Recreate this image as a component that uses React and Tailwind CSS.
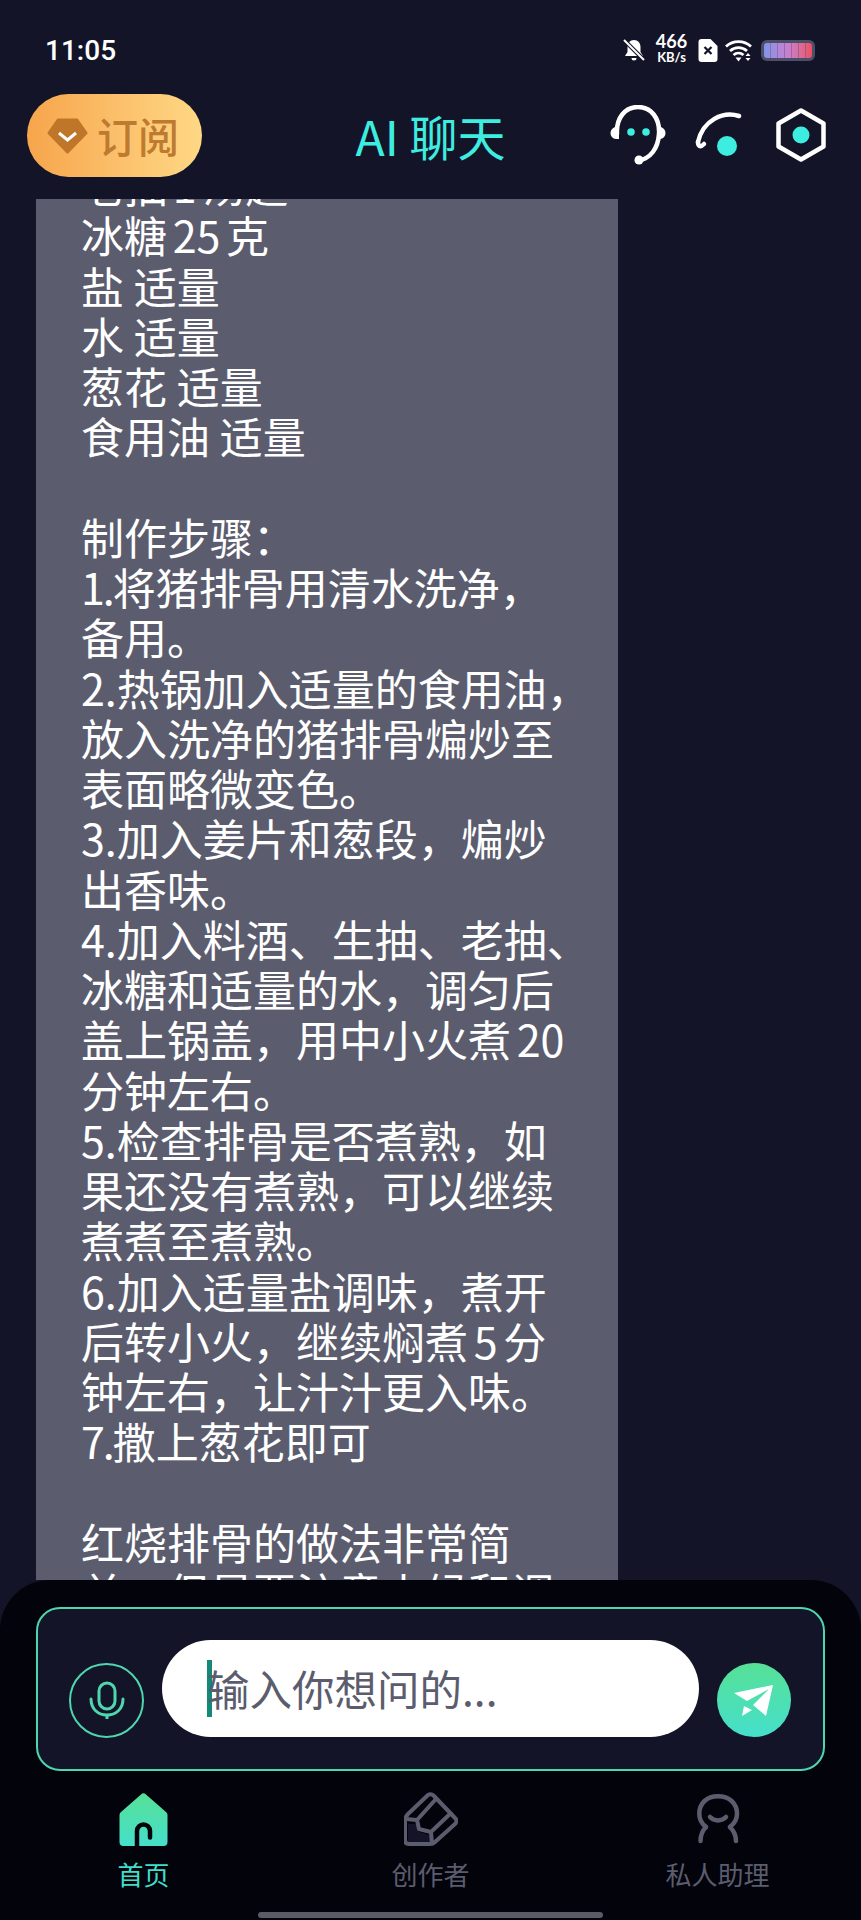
import React from 'react';

const lines = [
  '老抽 1 汤匙',
  '冰糖 25 克',
  '盐 适量',
  '水 适量',
  '葱花 适量',
  '食用油 适量',
  '',
  '制作步骤：',
  '1.将猪排骨用清水洗净，',
  '备用。',
  '2.热锅加入适量的食用油，',
  '放入洗净的猪排骨煸炒至',
  '表面略微变色。',
  '3.加入姜片和葱段，煸炒',
  '出香味。',
  '4.加入料酒、生抽、老抽、',
  '冰糖和适量的水，调匀后',
  '盖上锅盖，用中小火煮 20',
  '分钟左右。',
  '5.检查排骨是否煮熟，如',
  '果还没有煮熟，可以继续',
  '煮煮至煮熟。',
  '6.加入适量盐调味，煮开',
  '后转小火，继续焖煮 5 分',
  '钟左右，让汁汁更入味。',
  '7.撒上葱花即可',
  '',
  '红烧排骨的做法非常简',
  '单，但是要注意火候和调',
];

// 1 and 7 sit tighter in the original font, and spaces next to digits are narrower
const ChatLine = ({ line }) => {
  const narrow = /^[17]\./.test(line);
  return (
    <div className={`h-[50.250px] ${/\d /.test(line) || / \d/.test(line) ? '[word-spacing:-4px]' : ''}`}>
      {narrow ? (
        <>
          <span className="tracking-[-2px]">{line.slice(0, 2)}</span>
          {line.slice(2)}
        </>
      ) : (
        line
      )}
    </div>
  );
};

const StatusBar = () => (
  <div className="h-[95px] shrink-0 flex items-center pl-[45px] pr-[46px] pt-[5px] text-white">
    <span className="text-[28px] font-medium font-['Roboto',sans-serif] leading-none translate-y-[1px]">11:05</span>
    <div className="ml-auto flex items-center">
      <svg width="24" height="24" viewBox="0 0 24 24">
        <path d="M12 2c4 0 6.500 3 6.500 7v5l2.500 4H3l2.500-4V9C5.500 5 8 2 12 2z" fill="#fff" />
        <path d="M9.500 20h5a2.500 2.500 0 0 1-5 0z" fill="#fff" />
        <path d="M2 2l20 20" stroke="#141428" strokeWidth="4" />
        <path d="M2 2l20 20" stroke="#fff" strokeWidth="2" />
      </svg>
      <div className="ml-[9px] w-[33px] flex flex-col items-center font-['Lato',sans-serif] font-bold leading-none -translate-y-[1px]">
        <span className="text-[18px] h-[15px] leading-[15px]">466</span>
        <span className="text-[13px] h-[13px] leading-[13px] mt-[2px] whitespace-nowrap">KB/s</span>
      </div>
      <svg className="ml-[10px]" width="20" height="23" viewBox="0 0 19 23">
        <path d="M3 0h9l7 7v13a3 3 0 0 1-3 3H3a3 3 0 0 1-3-3V3a3 3 0 0 1 3-3z" fill="#fff" />
        <path d="M6 8l7 7M13 8l-7 7" stroke="#141428" strokeWidth="2.200" />
      </svg>
      <svg className="ml-[7px]" width="28" height="23" viewBox="0 0 28 23" fill="none">
        <path d="M1 7.500C8 1 19 1 26 7.500" stroke="#fff" strokeWidth="2.800" />
        <path d="M5 12c5-4.500 12-4.500 17 0" stroke="#fff" strokeWidth="2.800" />
        <path d="M8.500 16c3-2.500 7-2.500 10 0" stroke="#fff" strokeWidth="2.800" />
        <path d="M10.500 18.500h6l-3 4z" fill="#fff" />
        <path d="M23 14l2.500 3h-5zM23 22l2.500-3h-5z" fill="#fff" />
      </svg>
      <div className="ml-[8px] w-[54px] h-[21px] rounded-[6px] bg-[#4d4f68] p-[3px]">
        <div className="h-full rounded-[3px] bg-gradient-to-r from-[#7f93e8] via-[#c97fd0] to-[#ec4f63] flex justify-evenly">
          <i className="w-px h-full bg-[#4d4f68]/40" />
          <i className="w-px h-full bg-[#4d4f68]/40" />
          <i className="w-px h-full bg-[#4d4f68]/40" />
          <i className="w-px h-full bg-[#4d4f68]/40" />
          <i className="w-px h-full bg-[#4d4f68]/40" />
          <i className="w-px h-full bg-[#4d4f68]/40" />
        </div>
      </div>
    </div>
  </div>
);

const Header = () => (
  <div className="h-[104px] shrink-0 relative flex items-start pl-[27px]">
    <div className="w-[175px] h-[83px] -mt-[1px] rounded-full bg-gradient-to-r from-[#f6a54b] to-[#ffd885] flex items-center pl-[20px]">
      <svg width="41" height="36" viewBox="0 0 41 36">
        <path d="M11 2h19l9 13-18.500 19L2 15z" fill="#bf7629" stroke="#bf7629" strokeWidth="3" strokeLinejoin="round" />
        <path d="M12 15l8.500 7 8.500-7" fill="none" stroke="#fff" strokeWidth="3" />
      </svg>
      <span className="ml-[9px] text-[41px] leading-none font-medium text-[#bd7a30]">订阅</span>
    </div>
    <div className="absolute left-0 right-0 top-[10px] text-center text-[48px] leading-[60px] text-[#3deee0]">AI 聊天</div>
    <div className="ml-auto mr-[35px] mt-[10px] flex items-start">
      <svg width="56" height="60" viewBox="0 0 56 60" fill="none">
        <path d="M7 29C6 13 15 2 28 2s22 11 21 27c-1 14-8 25-22 27" stroke="#fff" strokeWidth="4.500" strokeLinecap="round" />
        <circle cx="29" cy="55" r="4.500" fill="#fff" />
        <path d="M7 22a6 6 0 0 0-1 12h3V22z" fill="#fff" />
        <path d="M49 22a6 6 0 0 1 1 12h-3V22z" fill="#fff" />
        <circle cx="21" cy="27" r="3.800" fill="#3deee0" />
        <circle cx="36" cy="27" r="3.800" fill="#3deee0" />
      </svg>
      <svg className="ml-[29px] mt-[5px]" width="63" height="46" viewBox="0 0 63 46" fill="none">
        <path d="M44 6C28 1 8 10 3 32" stroke="#fff" strokeWidth="4.500" strokeLinecap="round" />
        <path d="M3 32c0 4 2 6 6 2" stroke="#fff" strokeWidth="4.500" strokeLinecap="round" />
        <circle cx="32" cy="36" r="10" fill="#3deee0" />
      </svg>
      <svg className="ml-[18px] mt-[3px]" width="50" height="54" viewBox="0 0 50 54" fill="none">
        <path d="M25 2.500l22.500 13v23L25 51.500 2.500 38.500v-23z" stroke="#fff" strokeWidth="4.500" strokeLinejoin="round" />
        <circle cx="25" cy="27" r="8.500" fill="#3deee0" />
      </svg>
    </div>
  </div>
);

const NavItem = ({ label, active, children }) => (
  <div className="flex flex-col items-center">
    <div className="h-[54px] flex items-center justify-center">{children}</div>
    <span className={`mt-[12px] text-[26px] leading-[32px] ${active ? 'text-[#3fdfcb]' : 'text-[#5b5d6e]'}`}>{label}</span>
  </div>
);

const App = () => {
  return (
    <div className="w-[861px] h-[1920px] bg-[#141428] flex flex-col overflow-hidden font-['Noto_Sans_CJK_SC',sans-serif]">
      <StatusBar />
      <Header />

      {/* Chat bubble, scrolled part way */}
      <div className="flex-1 min-h-0 overflow-hidden">
        <div className="ml-[36px] w-[582px] h-full overflow-hidden bg-[#5b5d6e] pl-[45px] text-white text-[43px] leading-[50.250px]">
          <div className="-mt-[40px] whitespace-nowrap">
            {lines.map((line, i) => (
              <ChatLine key={i} line={line} />
            ))}
          </div>
        </div>
      </div>

      {/* Bottom input + tabs */}
      <div className="h-[340px] shrink-0 bg-[#03030b] rounded-t-[50px] relative px-[36px] pt-[27px]">
        <div className="h-[164px] rounded-[24px] border-2 border-[#4fd6ae] bg-[#141428] flex items-start pl-[31px]">
          <div className="mt-[54px] w-[75px] h-[75px] rounded-full border-2 border-[#4fd6ae] flex items-center justify-center">
            <svg width="36" height="40" viewBox="0 0 36 40" fill="none" stroke="#4fd6ae" strokeWidth="3">
              <rect x="10" y="2" width="16" height="26" rx="8" />
              <path d="M2 18c0 10 7 16 16 16s16-6 16-16" strokeLinecap="round" />
              <path d="M18 34v4" />
            </svg>
          </div>
          <div className="ml-[18px] mt-[31px] w-[537px] h-[97px] rounded-full bg-white flex items-center pl-[45px]">
            <span className="w-[5px] h-[57px] bg-[#14897a] shrink-0" />
            <span className="-ml-[5px] text-[42.500px] leading-none text-[#5b5d6e] whitespace-nowrap">输入你想问的...</span>
          </div>
          <div className="ml-[18px] mt-[54px] w-[74px] h-[74px] rounded-full bg-gradient-to-b from-[#56e096] to-[#45dfcb]">
            <svg width="74" height="74" viewBox="0 0 74 74" fill="#fff">
              <path d="M56 22L17 30l13 8 22-12-16 16 13 11z" />
              <path d="M25 53l2-10 8 4z" />
            </svg>
          </div>
        </div>

        <div className="absolute left-0 right-0 top-[212px] grid grid-cols-3">
          <NavItem label="首页" active>
            <svg width="49" height="53" viewBox="0 0 49 53">
              <defs>
                <linearGradient id="homeGrad" x1="0" y1="0" x2="0" y2="1">
                  <stop offset="0" stopColor="#56e096" />
                  <stop offset="1" stopColor="#45dfcb" />
                </linearGradient>
              </defs>
              <path d="M22 1.500a3.500 3.500 0 0 1 5 0L47 19a4 4 0 0 1 1.500 3v27a4 4 0 0 1-4 4H4.500a4 4 0 0 1-4-4V22A4 4 0 0 1 2 19z" fill="url(#homeGrad)" />
              <path d="M18 53V38a6.500 6.500 0 0 1 13 0v6.500" fill="none" stroke="#03030b" strokeWidth="4.500" strokeLinecap="round" />
            </svg>
          </NavItem>
          <NavItem label="创作者">
            <svg width="54" height="54" viewBox="0 0 54 54" fill="none" stroke="#5b5d6e" strokeWidth="4" strokeLinejoin="round">
              <path d="M4 32h9l2 8 11 3v7H4z" fill="#141428" stroke="none" />
              <path d="M24 3L4 22q-3 3-3 7v19q0 4 4 4h21q3 0 5-2l20-18q3-3 0-6L30 4q-3-3-6-1z" />
              <path d="M2 27l11 1 2 9 12 3 1 12" />
              <path d="M13 28L32 7M28 39L48 20" />
            </svg>
          </NavItem>
          <NavItem label="私人助理">
            <svg width="44" height="50" viewBox="0 0 42 50" fill="none" stroke="#5b5d6e" strokeWidth="4.500" strokeLinecap="round">
              <path d="M9 33C4 29 2.300 25 2.300 20 2.300 9 10 2.300 21 2.300S40 9 40 20c0 5-2 9-7 13" />
              <path d="M9 33c-4 4-5.500 9-5.500 14M33 33c4 4 6 9 6 14" />
              <path d="M13 23c4 4.500 12 4.500 16 0" />
            </svg>
          </NavItem>
        </div>

        <div className="absolute left-[258px] top-[332px] w-[345px] h-[6px] rounded-full bg-[#5b5b66]" />
      </div>
    </div>
  );
};

export default App;
